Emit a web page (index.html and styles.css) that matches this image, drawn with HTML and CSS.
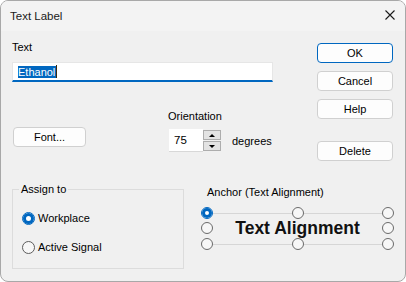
FILE: index.html
```html
<!DOCTYPE html>
<html>
<head>
<meta charset="utf-8">
<link rel="stylesheet" href="styles.css">
</head>
<body>
<div class="window">
  <div class="titlebar">
    <span class="title">Text Label</span>
    <span class="close">
      <svg width="10" height="10" viewBox="0 0 10 10"><path d="M0.5 0.5 L9.5 9.5 M9.5 0.5 L0.5 9.5" stroke="#1a1a1a" stroke-width="1.1" fill="none"/></svg>
    </span>
  </div>
  <div class="content">
    <div class="upper">
      <div class="main">
        <div class="field-label">Text</div>
        <div class="textbox"><span class="sel">Ethanol</span><span class="caret"></span></div>
        <div class="mid-row">
          <button class="btn font-btn">Font...</button>
          <div class="orient">
            <div class="orient-label">Orientation</div>
            <div class="spin-row">
              <div class="spin">
                <span class="spin-value">75</span>
                <div class="spin-btns">
                  <span class="spin-btn"><span class="arrow-up"></span></span>
                  <span class="spin-btn"><span class="arrow-down"></span></span>
                </div>
              </div>
              <span class="units">degrees</span>
            </div>
          </div>
        </div>
      </div>
      <div class="side">
        <button class="btn side-btn default">OK</button>
        <button class="btn side-btn">Cancel</button>
        <button class="btn side-btn">Help</button>
        <button class="btn side-btn delete">Delete</button>
      </div>
    </div>
    <div class="bottom-row">
      <fieldset class="group">
        <legend>Assign to</legend>
        <div class="radio-row first"><span class="radio checked"></span><span class="radio-text">Workplace</span></div>
        <div class="radio-row"><span class="radio"></span><span class="radio-text">Active Signal</span></div>
      </fieldset>
      <div class="anchor">
        <div class="anchor-label">Anchor (Text Alignment)</div>
        <div class="anchor-grid">
          <span class="radio small checked"></span>
          <span class="line"></span>
          <span class="radio small"></span>
          <span class="line"></span>
          <span class="radio small"></span>

          <span class="radio small"></span>
          <span class="sample">Text Alignment</span>
          <span class="radio small"></span>

          <span class="radio small"></span>
          <span class="line"></span>
          <span class="radio small"></span>
          <span class="line"></span>
          <span class="radio small"></span>
        </div>
      </div>
    </div>
  </div>
</div>
</body>
</html>
```

FILE: styles.css
```css
html, body {
  margin: 0;
  padding: 0;
  background: #ffffff;
}

body {
  font-family: "Liberation Sans", Arial, sans-serif;
  font-size: 11px;
  color: #000;
}

.window {
  width: 406px;
  height: 282px;
  box-sizing: border-box;
  border: 1px solid #a8a8a8;
  border-radius: 8px;
  overflow: hidden;
  background: #f0f0f0;
  display: flex;
  flex-direction: column;
}

.titlebar {
  height: 30px;
  flex: none;
  background: #f3f3f3;
  display: flex;
  align-items: center;
  padding-left: 9px;
  padding-bottom: 1px;
  box-sizing: border-box;
}

.title {
  font-size: 11.5px;
  color: #1a1a1a;
}

.close {
  margin-left: auto;
  margin-right: 10px;
  width: 10px;
  height: 10px;
  display: flex;
  margin-top: -1px;
}

.content {
  flex: 1;
  display: flex;
  flex-direction: column;
  padding-left: 11px;
}

.upper {
  display: flex;
  align-items: flex-start;
}

.main {
  display: flex;
  flex-direction: column;
}

.field-label {
  margin-top: 9px;
  line-height: 14px;
  height: 14px;
}

.textbox {
  margin-top: 8px;
  width: 261px;
  height: 20px;
  box-sizing: border-box;
  background: #fff;
  border: 1px solid #e6e6e6;
  border-bottom: 2px solid #0067c0;
  display: flex;
  align-items: center;
  padding-left: 5px;
}

.sel {
  background: #0067c0;
  color: #fff;
  line-height: 12px;
  height: 12px;
  padding-right: 1px;
}

.caret {
  width: 1px;
  height: 13px;
  background: #3a2a10;
}

.mid-row {
  margin-top: 27px;
  display: flex;
  align-items: flex-start;
}

.btn {
  font-family: "Liberation Sans", Arial, sans-serif;
  font-size: 11px;
  color: #000;
  background: #fdfdfd;
  border: 1px solid #d0d0d0;
  border-radius: 4px;
  padding: 0;
  height: 20px;
  box-sizing: border-box;
}

.font-btn {
  margin-top: 18px;
  margin-left: 1px;
  width: 73px;
}

.orient {
  margin-left: 82px;
  display: flex;
  flex-direction: column;
}

.orient-label {
  line-height: 14px;
  height: 14px;
}

.spin-row {
  margin-top: 6px;
  display: flex;
  align-items: center;
}

.spin {
  margin-left: 1px;
  display: flex;
  height: 23px;
}

.spin-value {
  width: 34px;
  box-sizing: border-box;
  background: #fff;
  border-bottom: 1px solid #d8d8d8;
  padding-left: 5px;
  line-height: 23px;
  font-size: 11.5px;
}

.spin-btns {
  width: 18px;
  display: flex;
  flex-direction: column;
  gap: 1px;
  padding-top: 1px;
  box-sizing: border-box;
}

.spin-btn {
  height: 10px;
  box-sizing: border-box;
  background: #e3e3e3;
  border: 1px solid #adadad;
  display: flex;
  align-items: center;
  justify-content: center;
}

.arrow-up {
  width: 0;
  height: 0;
  border-left: 3.5px solid transparent;
  border-right: 3.5px solid transparent;
  border-bottom: 3.5px solid #000;
}

.arrow-down {
  width: 0;
  height: 0;
  border-left: 3.5px solid transparent;
  border-right: 3.5px solid transparent;
  border-top: 3.5px solid #000;
}

.units {
  margin-left: 11px;
}

.side {
  margin-left: auto;
  margin-right: 12px;
  padding-top: 12px;
  display: flex;
  flex-direction: column;
  gap: 8px;
}

.side-btn {
  width: 76px;
}

.side-btn.default {
  border-color: #0067c0;
}

.side-btn.delete {
  margin-top: 14px;
}

.bottom-row {
  margin-top: 21px;
  display: flex;
  align-items: flex-start;
}

.group {
  margin: 0;
  padding: 0;
  width: 172px;
  height: 87px;
  box-sizing: border-box;
  border: 1px solid #dcdcdc;
  min-width: 0;
}

.group legend {
  margin-left: 6px;
  padding: 0 2px;
  line-height: 14px;
}

.radio-row {
  display: flex;
  align-items: center;
  height: 16px;
  padding-left: 9px;
  margin-top: 13px;
}

.radio-row.first {
  margin-top: 14px;
}

.radio-text {
  margin-left: 3px;
}

.radio {
  width: 13px;
  height: 13px;
  box-sizing: border-box;
  border-radius: 50%;
  border: 1px solid #5c5c5c;
  background: #f7f7f7;
  flex: none;
}

.radio.checked {
  border-color: #0067c0;
  background: #fff;
  box-shadow: inset 0 0 0 3px #0067c0;
}

.radio.small {
  width: 12px;
  height: 12px;
  border-color: #6a6a6a;
}

.radio.small.checked {
  border-color: #0067c0;
  box-shadow: inset 0 0 0 3px #0067c0;
}

.anchor {
  margin-left: 17px;
  width: 193px;
}

.anchor-label {
  margin-top: 3px;
  padding-left: 6px;
  line-height: 14px;
  height: 14px;
}

.anchor-grid {
  margin-top: 7px;
  display: grid;
  grid-template-columns: 12px 1fr 12px 1fr 12px;
  grid-template-rows: 14px 16px 16px;
  align-items: center;
}

.line {
  height: 1px;
  background: #d6d6d6;
}

.sample {
  grid-column: 2 / 5;
  text-align: center;
  font-weight: bold;
  font-size: 17.5px;
  line-height: 16px;
  color: #111;
}
```
